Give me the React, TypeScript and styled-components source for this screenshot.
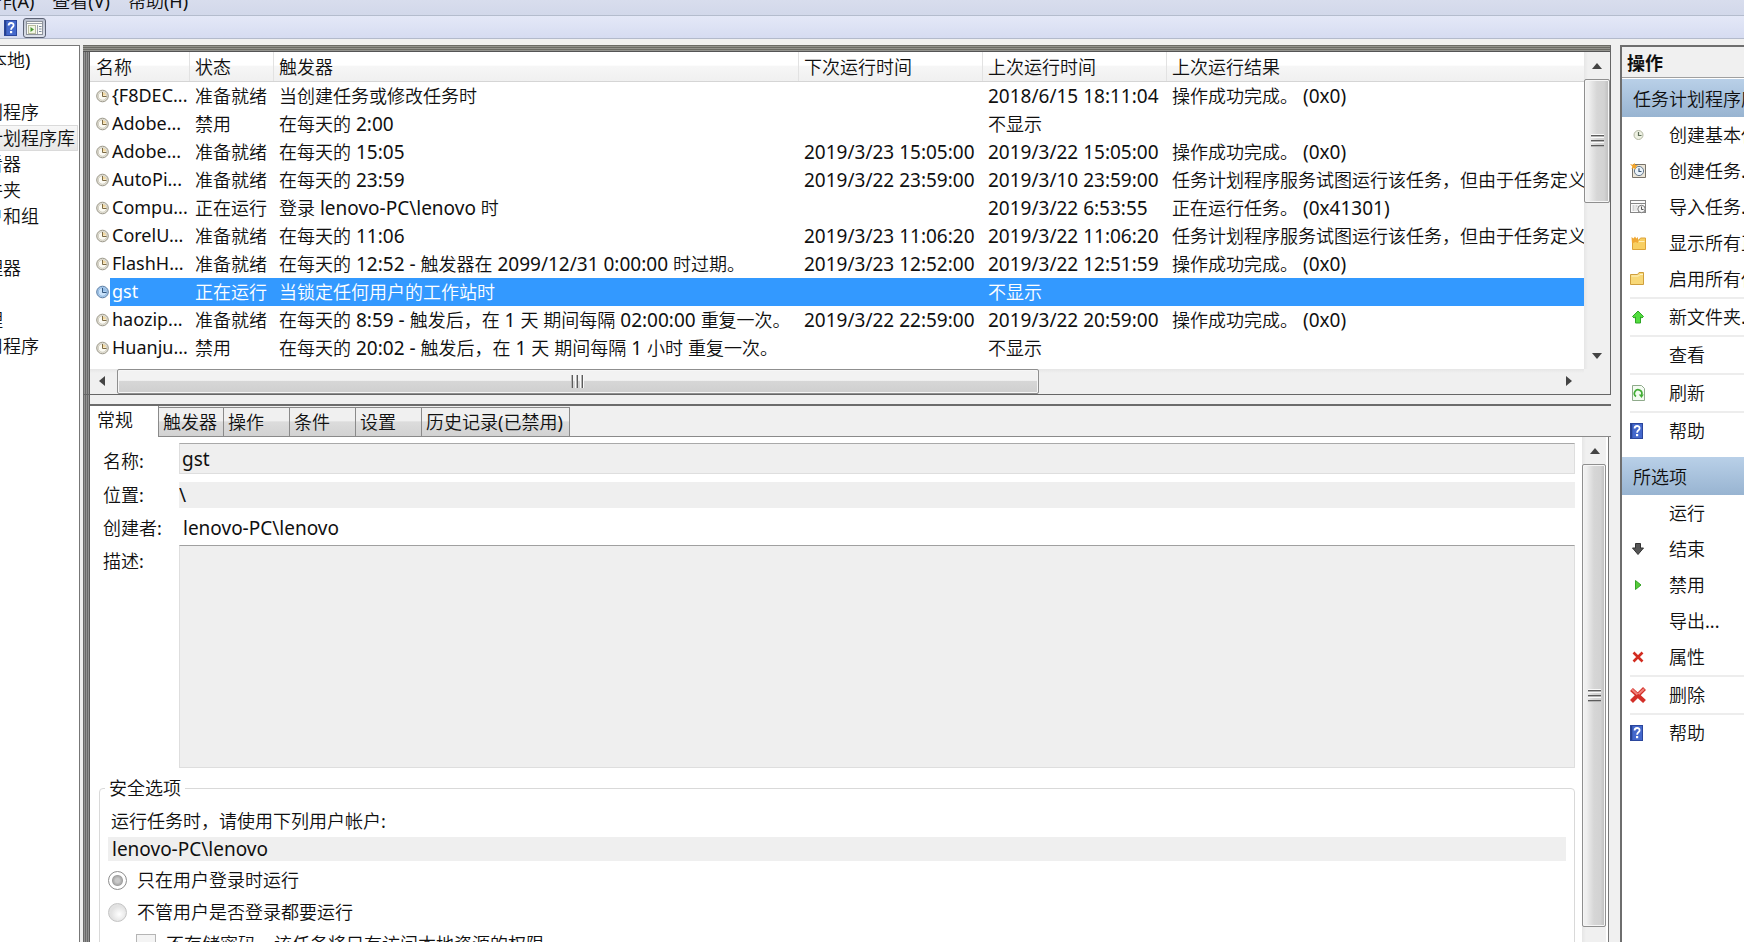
import React from 'react';
import styled, { createGlobalStyle, css } from 'styled-components';

const GlobalStyle = createGlobalStyle`
  *, *::before, *::after { box-sizing: border-box; }
  html, body { margin: 0; padding: 0; }
  body, button, input, textarea {
    font-family: "Noto Sans", "Noto Sans CJK SC DemiLight", "Noto Sans CJK SC Light", "Noto Sans CJK SC", sans-serif;
    font-size: 18px;
    line-height: 26px;
    color: #101010;
  }
  button { margin: 0; padding: 0; border: 0; background: none; text-align: left; }
`;

const Shell = styled.div`
  height: 100vh;
  display: flex;
  flex-direction: column;
  overflow: hidden;
  background: #f0f0f0;
`;

const MenuBar = styled.nav`
  flex: none;
  height: 16px;
  display: flex;
  align-items: flex-end;
  gap: 18px;
  margin-left: -6px;
  padding-bottom: 1px;
  overflow: hidden;
  background: linear-gradient(#d8dded, #d2d8ea);
  border-bottom: 1px solid #b4bccd;
`;

const MenuItem = styled.button`
  flex: none;
  height: 26px;
  white-space: nowrap;
`;

const ToolBar = styled.div`
  flex: none;
  height: 23px;
  display: flex;
  align-items: center;
  gap: 6px;
  padding: 1px 0 0 4px;
  background: linear-gradient(#e4e8f7, #d6dcf1);
  border-bottom: 1px solid #b3bacb;
`;

const ToolButton = styled.button<{ $pressed?: boolean }>`
  display: flex;
  align-items: center;
  justify-content: center;
  height: 20px;
  ${(p) =>
    p.$pressed &&
    css`
      width: 23px;
      border: 1px solid #5c6274;
      border-radius: 3px;
      background: linear-gradient(#b9bfce, #dde1ea);
    `}
`;

const Body = styled.div`
  flex: 1;
  min-height: 0;
  display: flex;
  padding-top: 6px;
`;

const Tree = styled.ul`
  flex: none;
  width: 80px;
  margin: 0;
  padding: 1px 0 0;
  list-style: none;
  overflow: hidden;
  background: #fff;
  border-top: 1px solid #777;
  border-right: 1px solid #777;
`;

const TreeItem = styled.li<{ $selected?: boolean; $root?: boolean }>`
  height: 26px;
  margin-left: ${(p) => (p.$root ? -11 : -15)}px;
  margin-right: 1px;
  white-space: nowrap;
  ${(p) =>
    p.$selected &&
    css`
      background: linear-gradient(#f8f8f8, #e6e6e6);
      box-shadow: inset 0 0 0 1px #dadada;
    `}
`;

const Center = styled.main`
  flex: 1;
  min-width: 0;
  display: flex;
  flex-direction: column;
  margin: 0 9px 0 3px;
  padding-left: 7px;
  background: linear-gradient(90deg, #6a6a6a 1px, #929292 1px 2px, #6a6a6a 2px 3px, #929292 3px 4px, #6a6a6a 4px 5px, #929292 5px 6px, #5c5c5c 6px 7px, #f0f0f0 7px);
`;

const ListPane = styled.section`
  flex: none;
  display: grid;
  grid-template-columns: minmax(0, 1fr) 26px;
  grid-template-rows: auto 25px;
  margin-left: -7px;
  padding: 7px 0 0 7px;
  border-right: 1px solid #666;
  border-bottom: 1px solid #666;
  background: linear-gradient(#6b6b66 1px, #94948f 1px 2px, #6b6b66 2px 3px, #94948f 3px 4px, #6b6b66 4px 5px, #94948f 5px 6px, #555 6px 7px, transparent 7px);
`;

const Viewport = styled.div`
  overflow: hidden;
  padding-bottom: 7px;
  background: #fff;
`;

const TaskTable = styled.table`
  width: 100%;
  table-layout: fixed;
  border-collapse: separate;
  border-spacing: 0;
`;

const HeadCell = styled.th`
  height: 30px;
  padding: 0 0 0 6px;
  font-weight: 400;
  text-align: left;
  white-space: nowrap;
  background: linear-gradient(#fff 45%, #f6f6f6 50%, #f0f0f0);
  border-bottom: 1px solid #d5d5d5;
  & + & { box-shadow: inset 1px 0 #e2e2e2; }
`;

const Cell = styled.td`
  height: 28px;
  padding: 0 0 0 6px;
  white-space: nowrap;
  overflow: hidden;
`;

const TaskRow = styled.tr<{ $selected?: boolean }>`
  ${(p) =>
    p.$selected &&
    css`
      color: #fff;
      ${Cell}:not(:first-child) { background: #3399ff; }
      ${Cell} span { background: #3399ff; }
    `}
`;

const Latin = styled.span`
  font-size: 19px;
`;

const NameBox = styled.div`
  display: flex;
  align-items: center;
  height: 28px;
  svg { flex: none; }
  span { flex: 1; height: 28px; padding-left: 2px; overflow: hidden; }
`;

const Corner = styled.div`
  background: #f0f0f0;
`;

const Bar = styled.div<{ $across?: boolean }>`
  display: flex;
  flex-direction: ${(p) => (p.$across ? 'row' : 'column')};
  background: ${(p) => (p.$across ? 'linear-gradient(#e6e6e6, #f0f0f0 4px)' : 'linear-gradient(90deg, #e6e6e6, #f0f0f0 4px)')};
`;

const ArrowButton = styled.button`
  flex: none;
  width: 25px;
  height: 27px;
  display: flex;
  align-items: center;
  justify-content: center;
`;

const SideArrow = styled(ArrowButton)`
  width: 27px;
  height: 24px;
  padding-right: 3px;
`;

const Track = styled.div<{ $across?: boolean }>`
  flex: 1;
  min-height: 0;
  display: flex;
  flex-direction: ${(p) => (p.$across ? 'row' : 'column')};
`;

const Thumb = styled.div<{ $across?: boolean; $size: string }>`
  flex: 0 0 ${(p) => p.$size};
  display: flex;
  align-items: center;
  justify-content: center;
  border: 1px solid #8f8f8f;
  border-radius: 2px;
  background: ${(p) => (p.$across ? 'linear-gradient(#f2f2f2 45%, #d6d6d6 50%, #cfcfcf)' : 'linear-gradient(90deg, #f0f0f0 15%, #e4e4e4 30%, #d6d6d6 50%, #d2d2d2 80%, #bcbcbc)')};
  box-shadow: inset 0 0 0 1px #f6f6f6;
`;

const Details = styled.section`
  flex: 1;
  min-height: 0;
  display: flex;
  flex-direction: column;
  margin-top: 9px;
  border-top: 2px solid #6c6c6c;
  overflow: hidden;
`;

const Tabs = styled.div`
  flex: none;
  display: flex;
  align-items: flex-end;
  height: 31px;
`;

const Tab = styled.button<{ $width: number; $active?: boolean }>`
  flex: none;
  width: ${(p) => p.$width}px;
  height: 30px;
  padding-left: 4px;
  white-space: nowrap;
  border: 1px solid #8a8a8a;
  border-left-width: 0;
  background: linear-gradient(#f0f0f0 0 45%, #dcdcdc 50%, #d2d2d2);
  ${(p) =>
    p.$active &&
    css`
      height: 31px;
      padding: 0 0 4px 7px;
      border-width: 0 1px 0 0;
      background: #fff;
    `}
`;

const TabFill = styled.div`
  flex: 1;
  align-self: stretch;
  border-bottom: 1px solid #8a8a8a;
`;

const Sheet = styled.div`
  flex: 1;
  min-height: 0;
  display: grid;
  grid-template-columns: minmax(0, 1fr) 24px;
  margin-right: 2px;
  padding-right: 2px;
  border-right: 1px solid #777;
  background: #fff;
  overflow: hidden;
`;

const Form = styled.form`
  min-height: 0;
  padding: 6px 7px 0 9px;
  overflow: hidden;
`;

const Field = styled.div<{ $gap: number }>`
  display: grid;
  grid-template-columns: 80px minmax(0, 1fr);
  align-items: end;
  margin-bottom: ${(p) => p.$gap}px;
`;

const Label = styled.label`
  padding-left: 4px;
`;

const TextLine = styled.input<{ $framed?: boolean; $height: number; $inset: number }>`
  width: 100%;
  height: ${(p) => p.$height}px;
  padding: 0 0 0 ${(p) => p.$inset}px;
  border: 0;
  border-radius: 0;
  background: #efefef;
  outline: 0;
  font-size: 19px;
  ${(p) =>
    p.$framed &&
    css`
      border: 1px solid #dedede;
      border-top-color: #a9a9a9;
    `}
`;

const Author = styled.output`
  padding-left: 4px;
  font-size: 19px;
`;

const Description = styled.textarea`
  display: block;
  width: 100%;
  height: 223px;
  resize: none;
  border: 1px solid #dedede;
  border-top-color: #a0a0a0;
  border-radius: 0;
  background: #efefef;
`;

const TopLabel = styled(Label)`
  align-self: start;
  padding-top: 3px;
`;

const Group = styled.fieldset`
  min-width: 0;
  margin: 0;
  padding: 7px 8px 0;
  border: 1px solid #d9d9d9;
  border-radius: 4px;
`;

const Legend = styled.legend`
  margin-left: -3px;
  padding: 0 4px;
`;

const AccountLabel = styled.label`
  display: block;
  padding: 0 0 2px 3px;
`;

const Choices = styled.div`
  padding-top: 2px;
`;

const Choice = styled.label<{ $nested?: boolean }>`
  display: flex;
  align-items: center;
  height: 32px;
  gap: 10px;
  padding-left: ${(p) => (p.$nested ? 28 : 0)}px;
  white-space: nowrap;
`;

const Radio = styled.input`
  appearance: none;
  flex: none;
  width: 19px;
  height: 19px;
  margin: 0;
  border: 1px solid #c4c4c4;
  border-radius: 50%;
  background: radial-gradient(circle at 60% 60%, #fff, #e2e2e2 8px);
  &:checked {
    border-color: #8e8e8e;
    background: radial-gradient(circle, #c9c9c9 0 2px, #a2a2a2 5px, #fff 6px);
  }
`;

const Check = styled.input`
  appearance: none;
  flex: none;
  width: 20px;
  height: 20px;
  margin: 0;
  border: 1px solid #b5b5b5;
  background: #f4f4f4;
`;

const Actions = styled.aside`
  flex: none;
  width: 124px;
  overflow: hidden;
  background: #fff;
  border-left: 2px solid #6e6e6e;
  border-top: 2px solid #6e6e6e;
`;

const PaneTitle = styled.h2`
  height: 31px;
  margin: 0 0 1px;
  padding: 3px 0 0 5px;
  font-family: "Noto Sans", "Noto Sans CJK SC", sans-serif;
  font-size: 18px;
  line-height: 26px;
  font-weight: 700;
  background: #f0f0f0;
  border-bottom: 1px solid #a0a0a0;
`;

const SectionTitle = styled.h3`
  height: 38px;
  margin: 0;
  padding: 7px 0 0 11px;
  font-size: 18px;
  line-height: 26px;
  font-weight: 400;
  white-space: nowrap;
  background: linear-gradient(#b9d0e8, #98b4d1);
`;

const ActionList = styled.div`
  margin-bottom: 8px;
`;

const Action = styled.button`
  display: grid;
  grid-template-columns: 16px 1fr;
  align-items: center;
  column-gap: 23px;
  width: 100%;
  height: 36px;
  padding-left: 8px;
  white-space: nowrap;
`;

const Rule = styled.hr`
  height: 2px;
  margin: 0 0 0 8px;
  border: 0;
  background: #ededed;
`;

const Clock = ({ blue }: { blue?: boolean }) => (
  <svg width="14" height="14" viewBox="0 0 14 14">
    <circle cx="6.5" cy="7" r="5.8" fill={blue ? '#a9cdf0' : '#e6e3d8'} stroke={blue ? '#5a7ca3' : '#9a9789'} />
    <circle cx="6.5" cy="7" r="4.2" fill={blue ? '#c9e2fa' : '#fbfaf3'} stroke={blue ? '#86aed6' : '#c2bfb0'} strokeWidth=".7" />
    <path d="M7 3.5a3.200 3.200 0 0 1 3 3H7z" fill={blue ? '#92bde8' : '#f3d9a0'} />
    <path d="M6.5 3v4.500h4" fill="none" stroke={blue ? '#33577f' : '#7b6a45'} />
  </svg>
);

const HelpIcon = () => (
  <svg width="13" height="16" viewBox="0 0 13 16">
    <rect x=".5" y=".5" width="12" height="15" fill="#4468cc" stroke="#2b469c" />
    <path d="M1.5 1v14" stroke="#26408f" strokeWidth="1.6" />
    <path d="M4.6 5.600c0-3.400 5-3.400 5-.4 0 2.200-2.500 2-2.500 4.500" fill="none" stroke="#fff" strokeWidth="1.800" />
    <rect x="6" y="11" width="2.200" height="2.200" fill="#fff" />
  </svg>
);

const PaneIcon = () => (
  <svg width="17" height="14" viewBox="0 0 17 14">
    <rect x=".5" y=".5" width="16" height="13" fill="#fafaf6" stroke="#8e939b" />
    <path d="M1 2.5h15M11.5 4v9" stroke="#9da3ac" />
    <path d="M13 5.5h2.500M13 8h2.500M13 10.500h2.500" stroke="#7c8aa0" />
    <rect x="2.500" y="4.500" width="7" height="8" fill="#f3f6e6" stroke="#b9bda0" />
    <path d="M4.500 6l3.500 2.500-3.500 2.500z" fill="#4c9a34" />
  </svg>
);

type IconName = 'clock' | 'task' | 'import' | 'running' | 'folder' | 'up' | 'refresh' | 'help' | 'down' | 'play' | 'cross' | 'delete';

const ActionIcon = ({ name }: { name?: IconName }) => {
  if (!name) return <span />;
  if (name === 'help') return <HelpIcon />;
  return (
    <svg width="16" height="16" viewBox="0 0 16 16">
      {name === 'clock' && (
        <>
          <circle cx="8.500" cy="8" r="4.500" fill="#eef1e2" stroke="#b3b8a4" />
          <path d="M8.500 5v3.500h3" fill="none" stroke="#60705a" strokeWidth="1.200" />
        </>
      )}
      {name === 'task' && (
        <>
          <path d="M3 1.500h12.500v13H2.500V5" fill="#ece6d8" stroke="#77726a" />
          <circle cx="9" cy="8" r="4.600" fill="#eaf3fb" stroke="#68798c" />
          <path d="M9 5.200V8.500h2.500" fill="none" stroke="#3c5874" strokeWidth="1.200" />
          <path d="M0 1l3 .8L4.500 0l.8 2L8 2.200 5.800 4 6 6.500 3.800 5 1.500 6l.8-2.500z" fill="#f2a52c" />
        </>
      )}
      {name === 'import' && (
        <>
          <rect x=".5" y="1.500" width="15" height="12" fill="#fbfbfb" stroke="#868686" />
          <path d="M1 4.500h14" stroke="#868686" />
          <path d="M2.500 7h5M2.500 9h4M2.500 11h4" stroke="#aaa" strokeDasharray="2 1" />
          <circle cx="11.500" cy="10" r="3.700" fill="#f4f4f4" stroke="#777" />
          <path d="M11.500 7.500v3h2" fill="none" stroke="#555" />
        </>
      )}
      {name === 'running' && (
        <>
          <path d="M2.500 5h6.500l1.500-2h5V14.500h-13z" fill="#f8cf62" stroke="#dca338" />
          <path d="M1.500 2l2 1.500L5 1.500l1.300 2L8 2v6L5.500 7 2 8.500z" fill="#f0a834" />
          <path d="M9 6.500h5.500" stroke="#fff0bd" />
        </>
      )}
      {name === 'folder' && (
        <>
          <path d="M.5 3.500h7l1.500-2h4.500v12H.5z" fill="#f8d877" stroke="#cf9f3d" />
          <path d="M1.500 5h7l1.500-1.500h3" fill="none" stroke="#fff3c4" />
        </>
      )}
      {name === 'up' && <path d="M8 2l5.500 5.500-1.500 1.500-1.500-1V14h-5V8L4 9 2.500 7.500z" fill="#52dd3e" stroke="#2fa526" />}
      {name === 'refresh' && (
        <>
          <path d="M2.500.5h9l3 3v12h-12z" fill="#f4fbf2" stroke="#8faa8b" />
          <path d="M6 11.500a3.700 3.700 0 1 1 5.500-1.500" fill="none" stroke="#42ad35" strokeWidth="1.700" />
          <path d="M8.800 9.500h5l-2.300 3.500z" fill="#42ad35" />
        </>
      )}
      {name === 'down' && <path d="M5.500 2.500h5v4.500h3L8 13.500 2.500 7h3z" fill="#555" stroke="#333" />}
      {name === 'play' && <path d="M5.500 3.500l5.500 4.500-5.500 4.500z" fill="#55cc3a" stroke="#35a326" />}
      {name === 'cross' && <path d="M3.500 3.500l9 9M12.500 3.500l-9 9" stroke="#d22c20" strokeWidth="2.600" />}
      {name === 'delete' && (
        <>
          <path d="M1.500 2.500l13 12M14.500 1.500l-13 13" stroke="#d32f28" strokeWidth="4.200" />
          <path d="M2 2.500l5.500 5M14 2l-5.500 5" stroke="#f0837c" strokeWidth="2" />
        </>
      )}
    </svg>
  );
};

const arrows = {
  up: 'M5 0l5 6H0z',
  down: 'M0 0h10L5 6z',
  left: 'M6 0v10L0 5z',
  right: 'M0 0l6 5-6 5z',
};

const Arrow = ({ to }: { to: keyof typeof arrows }) => (
  <svg width={to === 'up' || to === 'down' ? 10 : 6} height={to === 'up' || to === 'down' ? 6 : 10}>
    <path d={arrows[to]} fill="#444" />
  </svg>
);

const Grip = ({ across }: { across?: boolean }) => (
  <svg width="13" height="13" viewBox="0 0 13 13">
    <g transform={across ? 'rotate(90 6.500 6.500)' : undefined}>
      <path d="M0 1.500h13M0 6.500h13M0 11.500h13" stroke="#5c5c5c" />
      <path d="M0 2.500h13M0 7.500h13M0 12.500h13" stroke="#b4b4b4" />
      <path d="M0 .5h13M0 3.500h13M0 8.500h13" stroke="#fafafa" />
    </g>
  </svg>
);

/* Latin runs are set one step larger than the Chinese text round them. */
const Mixed = ({ text }: { text: string }) => (
  <>
    {text.split(/([\x20-\x7e]+)/).map((run, i) => (i % 2 ? <Latin key={i}>{run}</Latin> : run))}
  </>
);

const tree = ['本地)', '', '划程序', '计划程序库', '看器', '件夹', '户和组', '', '理器', '', '理', '用程序'];

const columns: [string, number | undefined][] = [
  ['名称', 99],
  ['状态', 84],
  ['触发器', 525],
  ['下次运行时间', 184],
  ['上次运行时间', 184],
  ['上次运行结果', undefined],
];

const done = '操作成功完成。 (0x0)';
const failed = '任务计划程序服务试图运行该任务，但由于任务定义';

const tasks = [
  ['{F8DEC...', '准备就绪', '当创建任务或修改任务时', '', '2018/6/15 18:11:04', done],
  ['Adobe...', '禁用', '在每天的 2:00', '', '不显示', ''],
  ['Adobe...', '准备就绪', '在每天的 15:05', '2019/3/23 15:05:00', '2019/3/22 15:05:00', done],
  ['AutoPi...', '准备就绪', '在每天的 23:59', '2019/3/22 23:59:00', '2019/3/10 23:59:00', failed],
  ['Compu...', '正在运行', '登录 lenovo-PC\\lenovo 时', '', '2019/3/22 6:53:55', '正在运行任务。 (0x41301)'],
  ['CorelU...', '准备就绪', '在每天的 11:06', '2019/3/23 11:06:20', '2019/3/22 11:06:20', failed],
  ['FlashH...', '准备就绪', '在每天的 12:52 - 触发器在 2099/12/31 0:00:00 时过期。', '2019/3/23 12:52:00', '2019/3/22 12:51:59', done],
  ['gst', '正在运行', '当锁定任何用户的工作站时', '', '不显示', ''],
  ['haozip...', '准备就绪', '在每天的 8:59 - 触发后，在 1 天 期间每隔 02:00:00 重复一次。', '2019/3/22 22:59:00', '2019/3/22 20:59:00', done],
  ['Huanju...', '禁用', '在每天的 20:02 - 触发后，在 1 天 期间每隔 1 小时 重复一次。', '', '不显示', ''],
];

type ActionEntry = { text: string; icon?: IconName; rule?: boolean };

const libraryActions: ActionEntry[] = [
  { text: '创建基本任', icon: 'clock' },
  { text: '创建任务...', icon: 'task' },
  { text: '导入任务...', icon: 'import' },
  { text: '显示所有正', icon: 'running' },
  { text: '启用所有任', icon: 'folder' },
  { text: '新文件夹...', icon: 'up', rule: true },
  { text: '查看', rule: true },
  { text: '刷新', icon: 'refresh', rule: true },
  { text: '帮助', icon: 'help', rule: true },
];

const selectedActions: ActionEntry[] = [
  { text: '运行' },
  { text: '结束', icon: 'down' },
  { text: '禁用', icon: 'play' },
  { text: '导出...' },
  { text: '属性', icon: 'cross' },
  { text: '删除', icon: 'delete', rule: true },
  { text: '帮助', icon: 'help', rule: true },
];

const tabs: [string, number][] = [
  ['常规', 69],
  ['触发器', 65],
  ['操作', 66],
  ['条件', 66],
  ['设置', 66],
  ['历史记录(已禁用)', 148],
];

const ActionGroup = ({ title, items }: { title: string; items: ActionEntry[] }) => (
  <ActionList>
    <SectionTitle>{title}</SectionTitle>
    {items.map((a) => (
      <React.Fragment key={a.text}>
        {a.rule && <Rule />}
        <Action type="button">
          <ActionIcon name={a.icon} />
          {a.text}
        </Action>
      </React.Fragment>
    ))}
  </ActionList>
);

export default function App() {
  return (
    <Shell>
      <GlobalStyle />
      <MenuBar>
        <MenuItem type="button">作(A)</MenuItem>
        <MenuItem type="button">查看(V)</MenuItem>
        <MenuItem type="button">帮助(H)</MenuItem>
      </MenuBar>
      <ToolBar>
        <ToolButton type="button" aria-label="帮助">
          <HelpIcon />
        </ToolButton>
        <ToolButton type="button" $pressed aria-label="操作">
          <PaneIcon />
        </ToolButton>
      </ToolBar>
      <Body>
        <Tree>
          {tree.map((t, i) => (
            <TreeItem key={i} $root={i === 0} $selected={i === 3}>
              {t}
            </TreeItem>
          ))}
        </Tree>
        <Center>
          <ListPane>
            <Viewport>
              <TaskTable>
                <colgroup>
                  {columns.map(([name, width]) => (
                    <col key={name} width={width} />
                  ))}
                </colgroup>
                <thead>
                  <tr>
                    {columns.map(([name]) => (
                      <HeadCell key={name} scope="col">
                        {name}
                      </HeadCell>
                    ))}
                  </tr>
                </thead>
                <tbody>
                  {tasks.map((row, r) => (
                    <TaskRow key={r} $selected={r === 7}>
                      <Cell>
                        <NameBox>
                          <Clock blue={r === 7} />
                          <span>{row[0]}</span>
                        </NameBox>
                      </Cell>
                      {row.slice(1).map((value, c) => (
                        <Cell key={c}>
                          <Mixed text={value} />
                        </Cell>
                      ))}
                    </TaskRow>
                  ))}
                </tbody>
              </TaskTable>
            </Viewport>
            <Bar>
              <ArrowButton type="button" aria-label="向上"><Arrow to="up" /></ArrowButton>
              <Track>
                <Thumb $size="47%"><Grip /></Thumb>
              </Track>
              <ArrowButton type="button" aria-label="向下"><Arrow to="down" /></ArrowButton>
            </Bar>
            <Bar $across>
              <SideArrow type="button" aria-label="向左"><Arrow to="left" /></SideArrow>
              <Track $across>
                <Thumb $across $size="64%"><Grip across /></Thumb>
              </Track>
              <SideArrow type="button" aria-label="向右"><Arrow to="right" /></SideArrow>
            </Bar>
            <Corner />
          </ListPane>
          <Details>
            <Tabs role="tablist">
              {tabs.map(([name, width], i) => (
                <Tab key={name} type="button" role="tab" aria-selected={i === 0} $width={width} $active={i === 0}>
                  {name}
                </Tab>
              ))}
              <TabFill />
            </Tabs>
            <Sheet>
              <Form>
                <Field $gap={8}>
                  <Label htmlFor="name">名称:</Label>
                  <TextLine id="name" $framed $height={31} $inset={2} readOnly value="gst" />
                </Field>
                <Field $gap={7}>
                  <Label htmlFor="place">位置:</Label>
                  <TextLine id="place" $height={26} $inset={0} readOnly value="\" />
                </Field>
                <Field $gap={4}>
                  <Label htmlFor="author">创建者:</Label>
                  <Author id="author">lenovo-PC\lenovo</Author>
                </Field>
                <Field $gap={7}>
                  <TopLabel htmlFor="about">描述:</TopLabel>
                  <Description id="about" readOnly />
                </Field>
                <Group>
                  <Legend>安全选项</Legend>
                  <AccountLabel htmlFor="account">运行任务时，请使用下列用户帐户:</AccountLabel>
                  <TextLine id="account" $height={24} $inset={4} readOnly value="lenovo-PC\lenovo" />
                  <Choices>
                    <Choice>
                      <Radio type="radio" name="when" defaultChecked />
                      只在用户登录时运行
                    </Choice>
                    <Choice>
                      <Radio type="radio" name="when" />
                      不管用户是否登录都要运行
                    </Choice>
                    <Choice $nested>
                      <Check type="checkbox" />
                      不存储密码。该任务将只有访问本地资源的权限
                    </Choice>
                  </Choices>
                </Group>
              </Form>
              <Bar>
                <ArrowButton type="button" aria-label="向上"><Arrow to="up" /></ArrowButton>
                <Track>
                  <Thumb $size="calc(100% - 15px)"><Grip /></Thumb>
                </Track>
              </Bar>
            </Sheet>
          </Details>
        </Center>
        <Actions>
          <PaneTitle>操作</PaneTitle>
          <ActionGroup title="任务计划程序库" items={libraryActions} />
          <ActionGroup title="所选项" items={selectedActions} />
        </Actions>
      </Body>
    </Shell>
  );
}
